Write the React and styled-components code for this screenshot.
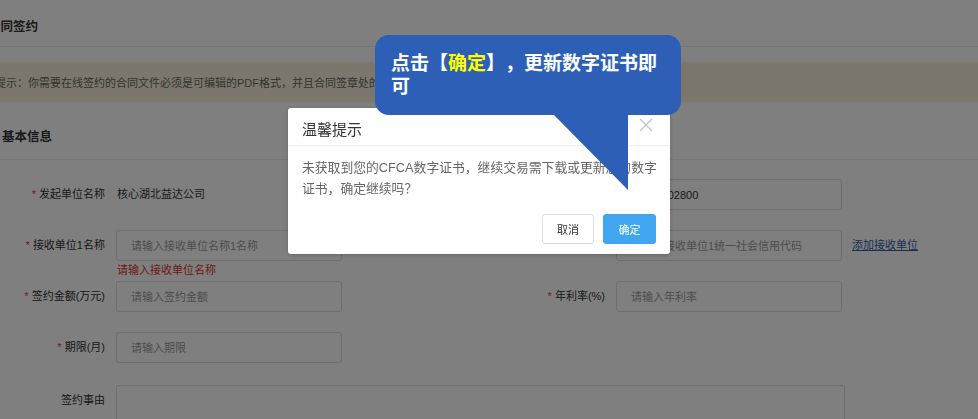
import React from "react";
import styled, { createGlobalStyle } from "styled-components";

const GlobalStyle = createGlobalStyle`
  html, body {
    margin: 0;
    padding: 0;
    background: #fff;
    overflow: hidden;
    font-family: "Liberation Sans", "Noto Sans CJK SC", sans-serif;
  }
  * {
    box-sizing: border-box;
    text-spacing-trim: space-all;
  }
`;

const Page = styled.div`
  margin-left: -14px;
  width: 1000px;
  height: 419px;
  overflow: hidden;
`;

const PageHeader = styled.div`
  height: 47px;
  padding: 5px 0 0 2px;
  display: flex;
  align-items: center;
  border-bottom: 1px solid #ececec;
  font-size: 12.5px;
  font-weight: bold;
  color: #333;
`;

const Banner = styled.div`
  margin-top: 15px;
  height: 40px;
  padding-left: 9px;
  display: flex;
  align-items: center;
  background: #f8efd8;
  font-size: 11px;
  color: #666;
  white-space: nowrap;
`;

const SectionTitle = styled.div`
  height: 58px;
  padding: 9px 0 0 16px;
  display: flex;
  align-items: center;
  border-bottom: 1px solid #ececec;
  font-size: 12.5px;
  font-weight: bold;
  color: #333;
`;

const Form = styled.div`
  padding: 19px 0 0 14px;
  display: flex;
  flex-direction: column;
  gap: 20px;
`;

const Row = styled.div`
  display: grid;
  grid-template-columns: 116px 226px 274px 226px auto;
  align-items: start;
  margin-top: ${(p) => (p.$extra ? `${p.$extra}px` : "0")};
`;

const Label = styled.div`
  padding-right: 11px;
  text-align: right;
  font-size: 11px;
  line-height: 31px;
  color: #333;
  white-space: nowrap;
  &::before {
    content: ${(p) => (p.$required ? '"* "' : '""')};
    color: #e03a3a;
  }
`;

const Value = styled.div`
  font-size: 11px;
  line-height: 31px;
  color: #333;
  padding-left: 1px;
`;

const Field = styled.div`
  position: relative;
`;

const Input = styled.input`
  display: block;
  width: 226px;
  height: 31px;
  margin: 0;
  padding: 0 14px;
  border: 1px solid #dcdcdc;
  border-radius: 3px;
  background: #fff;
  font-family: inherit;
  font-size: 11px;
  color: #333;
  outline: none;
  &::placeholder {
    color: #9a9a9a;
  }
`;

const ErrorText = styled.div`
  position: absolute;
  left: 1px;
  top: calc(100% + 2px);
  font-size: 11px;
  line-height: 14px;
  color: #e03030;
  white-space: nowrap;
`;

const Link = styled.a`
  padding-left: 10px;
  font-size: 11px;
  line-height: 31px;
  color: #2c5f9f;
  text-decoration: underline;
  white-space: nowrap;
`;

const TextArea = styled.textarea`
  grid-column: 2 / span 4;
  display: block;
  width: 729px;
  height: 80px;
  margin: 0;
  border: 1px solid #dcdcdc;
  border-radius: 3px;
  resize: none;
  font-family: inherit;
  outline: none;
`;

const Overlay = styled.div`
  position: fixed;
  inset: 0;
  background: rgba(0, 0, 0, 0.5);
`;

const Dialog = styled.div`
  position: fixed;
  left: 288px;
  top: 108px;
  width: 382px;
  background: #fff;
  border-radius: 3px;
  box-shadow: 0 1px 4px rgba(0, 0, 0, 0.2);
`;

const DialogHeader = styled.div`
  display: flex;
  justify-content: space-between;
  align-items: flex-start;
  padding: 12px 17px 5px 14px;
  border-bottom: 1px solid #f0f0f0;
`;

const DialogTitle = styled.div`
  font-size: 15px;
  line-height: 20px;
  color: #333;
`;

const CloseIcon = styled.svg`
  margin-top: -2px;
  width: 14px;
  height: 14px;
`;

const DialogBody = styled.div`
  padding: 11px 11px 0 14px;
  font-size: 12.8px;
  line-height: 21px;
  color: #666;
`;

const DialogFooter = styled.div`
  display: flex;
  justify-content: flex-end;
  gap: 9px;
  padding: 15px 14px 10px;
`;

const Button = styled.button`
  width: ${(p) => (p.$primary ? "53px" : "52px")};
  height: 30px;
  padding: 0;
  border: 1px solid ${(p) => (p.$primary ? "#40a6ef" : "#dedede")};
  border-radius: 3px;
  background: ${(p) => (p.$primary ? "#40a6ef" : "#fff")};
  color: ${(p) => (p.$primary ? "#fff" : "#333")};
  font-family: inherit;
  font-size: 11px;
`;

const Bubble = styled.div`
  position: fixed;
  left: 375px;
  top: 35px;
  width: 306px;
  height: 80px;
  padding: 17px 16px;
  border-radius: 14px;
  background: #2d5fb7;
  color: #fff;
  font-size: 19px;
  font-weight: bold;
  line-height: 23px;
`;

const Highlight = styled.span`
  color: #ffff00;
`;

const Tail = styled.svg`
  position: absolute;
  left: 178px;
  top: 79px;
  width: 75px;
  height: 76px;
`;

export default function App() {
  return (
    <>
      <GlobalStyle />
      <Page>
        <PageHeader>合同签约</PageHeader>
        <Banner>
          提示：你需要在线签约的合同文件必须是可编辑的PDF格式，并且合同签章处的关键字需要与系统约定一致，否则将无法完成签章。
        </Banner>
        <SectionTitle>基本信息</SectionTitle>
        <Form>
          <Row>
            <Label $required>发起单位名称</Label>
            <Value>核心湖北益达公司</Value>
            <Label $required>统一社会信用代码</Label>
            <Input defaultValue="91420102800" />
          </Row>
          <Row>
            <Label $required>接收单位1名称</Label>
            <Field>
              <Input placeholder="请输入接收单位名称1名称" />
              <ErrorText>请输入接收单位名称</ErrorText>
            </Field>
            <Label $required>统一社会信用代码</Label>
            <Input placeholder="请输入接收单位1统一社会信用代码" />
            <Link>添加接收单位</Link>
          </Row>
          <Row>
            <Label $required>签约金额(万元)</Label>
            <Input placeholder="请输入签约金额" />
            <Label $required>年利率(%)</Label>
            <Input placeholder="请输入年利率" />
          </Row>
          <Row>
            <Label $required>期限(月)</Label>
            <Input placeholder="请输入期限" />
          </Row>
          <Row $extra={2}>
            <Label>签约事由</Label>
            <TextArea />
          </Row>
        </Form>
      </Page>
      <Overlay />
      <Dialog>
        <DialogHeader>
          <DialogTitle>温馨提示</DialogTitle>
          <CloseIcon viewBox="0 0 14 14">
            <path d="M1 1 L13 13 M13 1 L1 13" stroke="#c4c4c4" strokeWidth="1.3" fill="none" />
          </CloseIcon>
        </DialogHeader>
        <DialogBody>
          未获取到您的CFCA数字证书，继续交易需下载或更新您的数字证书，确定继续吗？
        </DialogBody>
        <DialogFooter>
          <Button>取消</Button>
          <Button $primary>确定</Button>
        </DialogFooter>
      </Dialog>
      <Bubble>
        点击【<Highlight>确定</Highlight>】，更新数字证书即可
        <Tail viewBox="0 0 75 76">
          <polygon points="0,0 75,0 75,76" fill="#2d5fb7" />
        </Tail>
      </Bubble>
    </>
  );
}
